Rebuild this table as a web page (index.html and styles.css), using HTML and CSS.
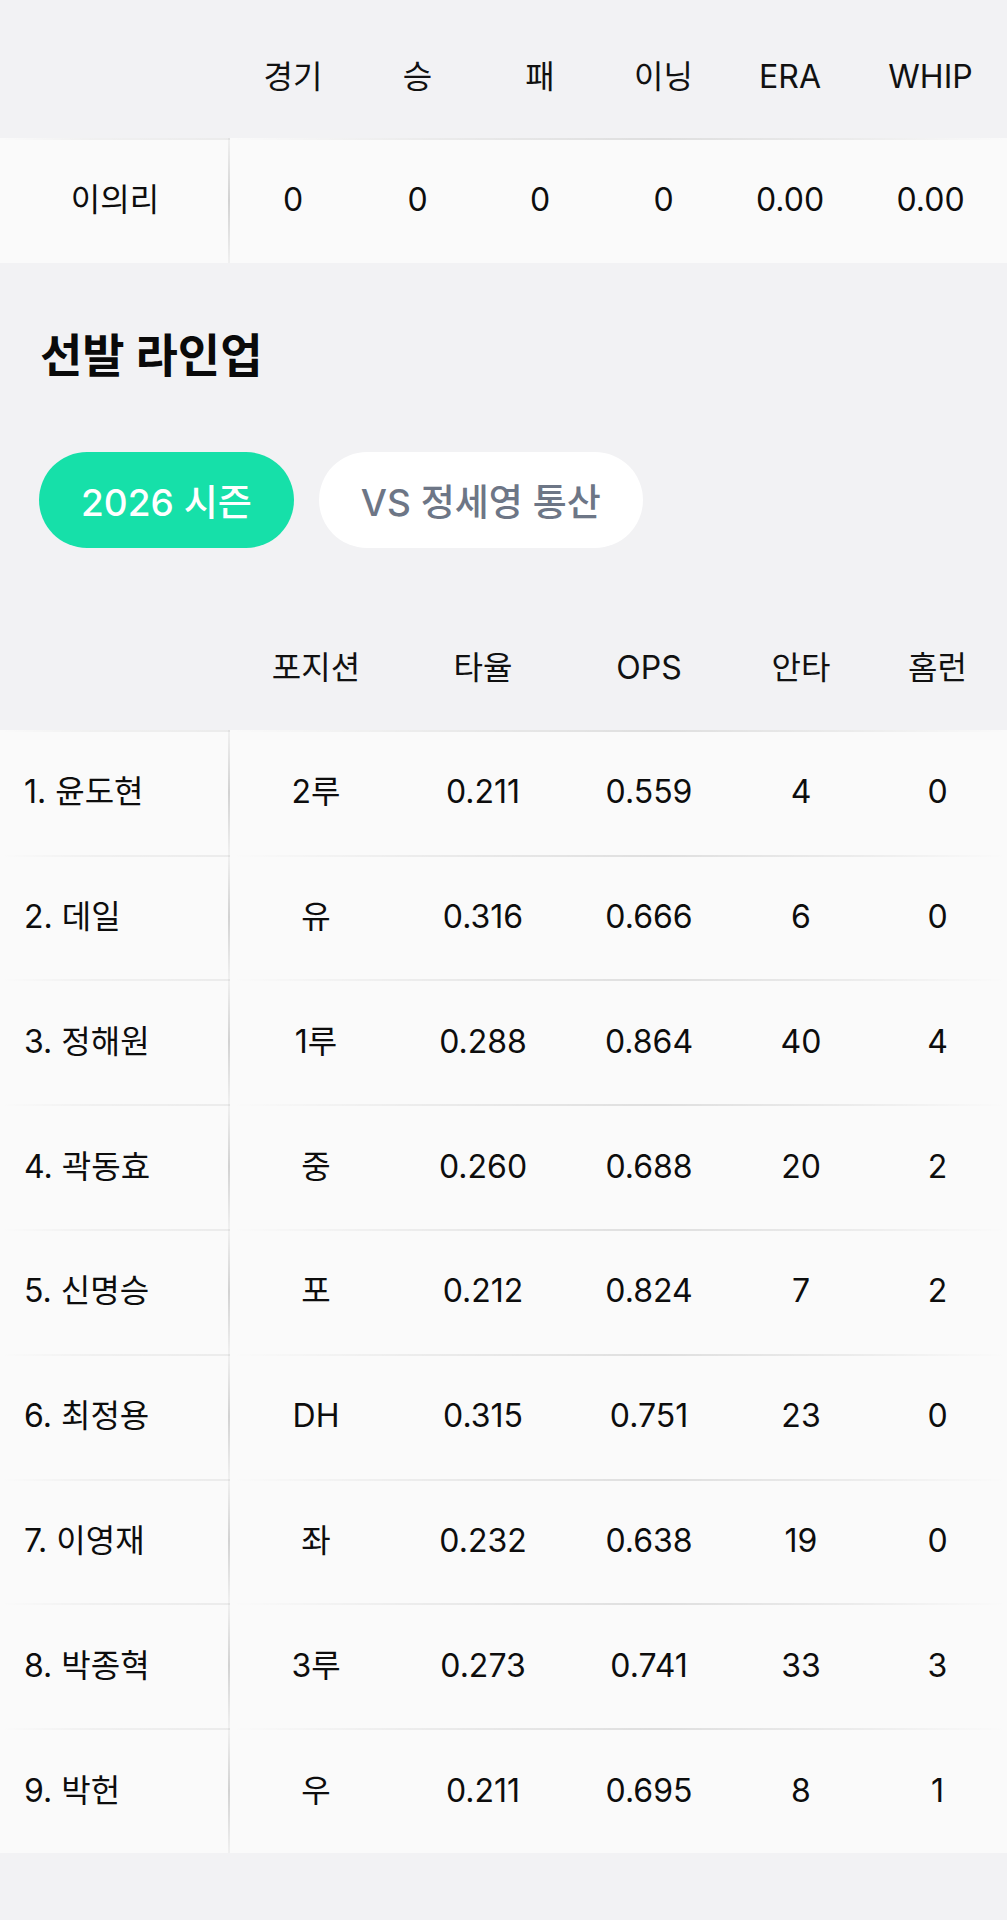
FILE: index.html
```html
<!DOCTYPE html>
<html lang="ko">
<head>
<meta charset="utf-8">
<title>선발 라인업</title>
<link rel="stylesheet" href="styles.css">
</head>
<body>
<div class="page">
  <section class="table pitcher">
    <div class="row head">
      <div class="name"></div>
      <div class="vals">
        <div class="cell">경기</div><div class="cell">승</div><div class="cell">패</div><div class="cell">이닝</div><div class="cell">ERA</div><div class="cell">WHIP</div>
      </div>
    </div>
    <div class="row body">
      <div class="name center">이의리</div>
      <div class="vals">
        <div class="cell">0</div><div class="cell">0</div><div class="cell">0</div><div class="cell">0</div><div class="cell">0.00</div><div class="cell">0.00</div>
      </div>
    </div>
  </section>

  <h2 class="title">선발 라인업</h2>

  <div class="tabs">
    <button class="tab active">2026 시즌</button>
    <button class="tab">VS 정세영 통산</button>
  </div>

  <section class="table lineup">
    <div class="row head">
      <div class="name"></div>
      <div class="vals">
        <div class="cell">포지션</div><div class="cell">타율</div><div class="cell">OPS</div><div class="cell">안타</div><div class="cell">홈런</div>
      </div>
    </div>
    <div class="row body"><div class="name">1. 윤도현</div><div class="vals"><div class="cell">2루</div><div class="cell">0.211</div><div class="cell">0.559</div><div class="cell">4</div><div class="cell">0</div></div></div>
    <div class="row body"><div class="name">2. 데일</div><div class="vals"><div class="cell">유</div><div class="cell">0.316</div><div class="cell">0.666</div><div class="cell">6</div><div class="cell">0</div></div></div>
    <div class="row body"><div class="name">3. 정해원</div><div class="vals"><div class="cell">1루</div><div class="cell">0.288</div><div class="cell">0.864</div><div class="cell">40</div><div class="cell">4</div></div></div>
    <div class="row body"><div class="name">4. 곽동효</div><div class="vals"><div class="cell">중</div><div class="cell">0.260</div><div class="cell">0.688</div><div class="cell">20</div><div class="cell">2</div></div></div>
    <div class="row body"><div class="name">5. 신명승</div><div class="vals"><div class="cell">포</div><div class="cell">0.212</div><div class="cell">0.824</div><div class="cell">7</div><div class="cell">2</div></div></div>
    <div class="row body"><div class="name">6. 최정용</div><div class="vals"><div class="cell">DH</div><div class="cell">0.315</div><div class="cell">0.751</div><div class="cell">23</div><div class="cell">0</div></div></div>
    <div class="row body"><div class="name">7. 이영재</div><div class="vals"><div class="cell">좌</div><div class="cell">0.232</div><div class="cell">0.638</div><div class="cell">19</div><div class="cell">0</div></div></div>
    <div class="row body"><div class="name">8. 박종혁</div><div class="vals"><div class="cell">3루</div><div class="cell">0.273</div><div class="cell">0.741</div><div class="cell">33</div><div class="cell">3</div></div></div>
    <div class="row body"><div class="name">9. 박헌</div><div class="vals"><div class="cell">우</div><div class="cell">0.211</div><div class="cell">0.695</div><div class="cell">8</div><div class="cell">1</div></div></div>
  </section>
</div>
</body>
</html>
```

FILE: styles.css
```css
* { box-sizing: border-box; }

html, body {
  margin: 0;
  padding: 0;
  background: #f2f2f4;
}

body {
  font-family: "Inter", "Noto Sans CJK KR", sans-serif;
  color: #0d0d0d;
  width: 1007px;
  min-height: 1920px;
}

.page {
  display: flex;
  flex-direction: column;
}

.row {
  display: grid;
  grid-template-columns: 230px 1fr;
}

.vals {
  display: grid;
}

.pitcher .vals {
  grid-template-columns: 126px 123px 122px 125px 128px 153px;
}

.lineup .vals {
  grid-template-columns: 172px 162px 170px 134px 139px;
}

.cell, .name {
  display: flex;
  align-items: center;
  font-size: 32px;
  line-height: 1;
}

.cell {
  justify-content: center;
}

.head {
  height: 138px;
}

.head .cell {
  padding-top: 15px;
  color: #111111;
}

.body {
  height: 124.8px;
}

.body .name,
.body .vals {
  background-color: #fafafa;
  background-image: linear-gradient(to right, rgba(0,0,0,0) 0%, rgba(0,0,0,0.06) 25%, rgba(0,0,0,0.11) 55%, rgba(0,0,0,0.06) 80%, rgba(0,0,0,0) 100%);
  background-size: 100% 2px;
  background-position: top left;
  background-repeat: no-repeat;
}

.body .name {
  padding-left: 24px;
  color: #0d0d0d;
  background-image:
    linear-gradient(to right, rgba(0,0,0,0) 0%, rgba(0,0,0,0.04) 40%, rgba(0,0,0,0.06) 100%),
    linear-gradient(to bottom, rgba(0,0,0,0.04) 0%, rgba(0,0,0,0.16) 50%, rgba(0,0,0,0.04) 100%);
  background-size: 100% 2px, 2px 100%;
  background-position: top left, top right;
  background-repeat: no-repeat, no-repeat;
}

.body .name.center {
  justify-content: center;
  padding-left: 0;
}

.title {
  margin: 66px 0 0 40px;
  font-size: 46px;
  line-height: 53px;
  font-weight: 700;
  color: #0a0a0a;
}

.tabs {
  display: flex;
  gap: 25px;
  margin: 70px 0 0 39px;
}

.tab {
  height: 96px;
  border: none;
  border-radius: 48px;
  padding: 0 42px;
  font-family: "Inter", "Noto Sans CJK KR", sans-serif;
  font-size: 37px;
  font-weight: 500;
  background: #ffffff;
  color: #6d7686;
  cursor: pointer;
}

.tab.active {
  background: #16e0a9;
  color: #ffffff;
}

.lineup {
  margin-top: 44px;
}
```
